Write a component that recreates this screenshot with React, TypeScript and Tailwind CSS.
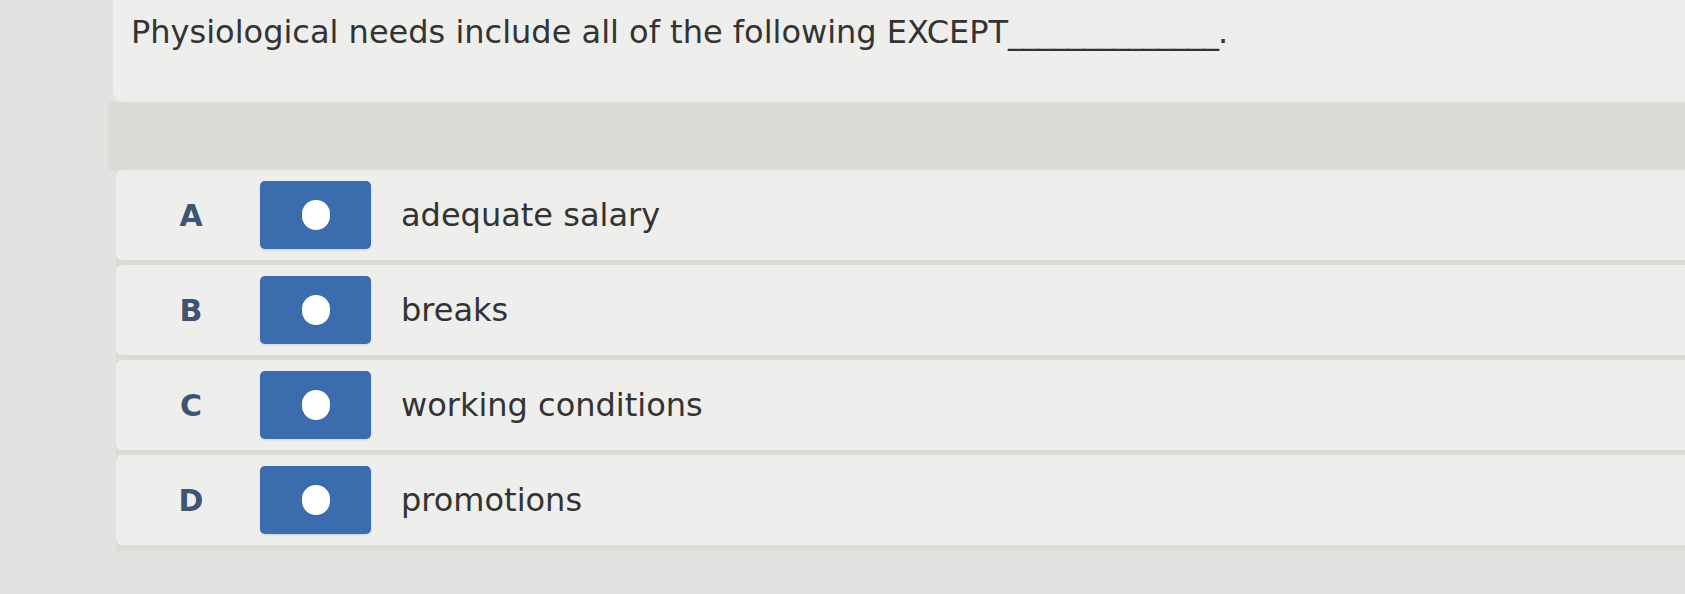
const options = [
  { letter: "A", text: "adequate salary" },
  { letter: "B", text: "breaks" },
  { letter: "C", text: "working conditions" },
  { letter: "D", text: "promotions" },
];

function OptionRow({ letter, text }: { letter: string; text: string }) {
  return (
    <div className="flex h-[90px] items-center rounded-l-md bg-[#eeeeec]">
      <div className="w-[150px] text-center text-[30px] font-bold text-[#3d5472]">{letter}</div>
      {/* radio style button */}
      <div className="-ml-[6px] flex h-[68px] w-[111px] items-center justify-center rounded-[5px] bg-[#3a6cae] shadow-sm">
        <div className="h-[30px] w-[28px] rounded-full bg-white" />
      </div>
      <div className="ml-[30px] text-[32px] text-[#333333]">{text}</div>
    </div>
  );
}

export default function App() {
  return (
    <div
      className="flex h-[594px] w-[1685px] flex-col overflow-hidden bg-[#e2e2e0]"
      style={{ fontFamily: '"DejaVu Sans", Verdana, sans-serif' }}
    >
      {/* question */}
      <div className="ml-[113px] h-[102px] rounded-bl-xl bg-[#eeeeec] pl-[18px] pt-[12px]">
        <p className="text-[32px] leading-[40px] text-[#333333]">
          Physiological needs include all of the following EXCEPT
          <span className="tracking-[-1px]">______________</span>.
        </p>
      </div>

      <div className="ml-[108px] h-[68px] bg-[#dcdbd8]" />

      {/* answers */}
      <div className="ml-[116px] flex flex-col gap-[5px] bg-[#dcdbd8] pb-[6px]">
        {options.map((o) => (
          <OptionRow key={o.letter} letter={o.letter} text={o.text} />
        ))}
      </div>
    </div>
  );
}
